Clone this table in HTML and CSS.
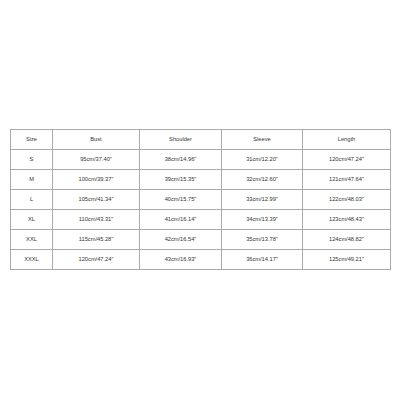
FILE: index.html
```html
<!DOCTYPE html>
<html>
<head>
<meta charset="utf-8">
<link rel="stylesheet" href="styles.css">
</head>
<body>
<table class="size-table">
  <colgroup>
    <col class="c-size"><col class="c-bust"><col class="c-shoulder"><col class="c-sleeve"><col class="c-length">
  </colgroup>
  <tr><td>Size</td><td>Bust</td><td>Shoulder</td><td>Sleeve</td><td>Length</td></tr>
  <tr><td>S</td><td>95cm/37.40"</td><td>38cm/14.96"</td><td>31cm/12.20"</td><td>120cm/47.24"</td></tr>
  <tr><td>M</td><td>100cm/39.37"</td><td>39cm/15.35"</td><td>32cm/12.60"</td><td>121cm/47.64"</td></tr>
  <tr><td>L</td><td>105cm/41.34"</td><td>40cm/15.75"</td><td>33cm/12.99"</td><td>122cm/48.03"</td></tr>
  <tr><td>XL</td><td>110cm/43.31"</td><td>41cm/16.14"</td><td>34cm/13.39"</td><td>123cm/48.43"</td></tr>
  <tr><td>XXL</td><td>115cm/45.28"</td><td>42cm/16.54"</td><td>35cm/13.78"</td><td>124cm/48.82"</td></tr>
  <tr><td>XXXL</td><td>120cm/47.24"</td><td>43cm/16.93"</td><td>36cm/14.17"</td><td>125cm/49.21"</td></tr>
</table>
</body>
</html>
```

FILE: styles.css
```css
html, body {
  margin: 0;
  padding: 0;
  background: #ffffff;
}
body {
  padding-top: 129px;
  padding-left: 10px;
}
.size-table {
  border-collapse: collapse;
  table-layout: fixed;
  width: 380px;
  font-family: "Liberation Sans", Arial, sans-serif;
  font-size: 5.7px;
  color: #333333;
}
.c-size { width: 42px; }
.c-bust { width: 87px; }
.c-shoulder { width: 82px; }
.c-sleeve { width: 81px; }
.c-length { width: 88px; }
.size-table td {
  border: 1.5px solid #aaaaaa;
  height: 20px;
  padding: 0;
  text-align: center;
  vertical-align: middle;
  box-sizing: border-box;
  line-height: 1;
}
```
